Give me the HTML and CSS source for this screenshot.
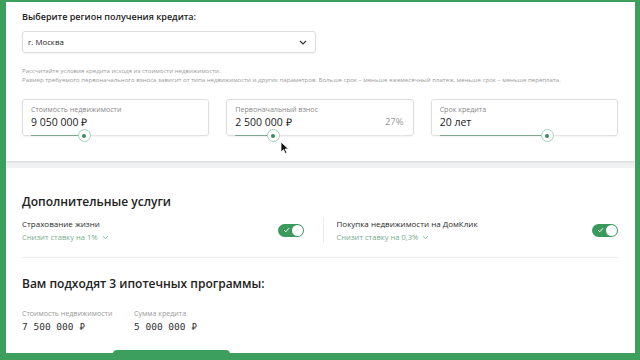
FILE: index.html
```html
<!DOCTYPE html>
<html lang="ru">
<head>
  <meta charset="UTF-8" />
  <meta name="viewport" content="width=device-width, initial-scale=1.0"/>
  <title>Ипотечный калькулятор</title>
  <link rel="stylesheet" href="styles.css">
</head>
<body>

  <div class="page">

    <div class="card calc">
      <h2 class="region-title">Выберите регион получения кредита:</h2>
      <div class="select">
        <span>г. Москва</span>
        <svg class="select-arrow" width="8" height="5" viewBox="0 0 8 5"><path d="M1 1l3 3 3-3" fill="none" stroke="#333" stroke-width="1.2"/></svg>
      </div>

      <p class="hint">
        Рассчитайте условия кредита исходя из стоимости недвижимости.<br>
        Размер требуемого первоначального взноса зависит от типа недвижимости и других параметров. Больше срок – меньше ежемесячный платеж, меньше срок – меньше переплата.
      </p>

      <div class="fields">
        <div class="field">
          <div class="field-label">Стоимость недвижимости</div>
          <div class="field-value">9 050 000 ₽</div>
          <div class="track"><div class="track-fill" style="width: 31.6%"><span class="knob"></span></div></div>
        </div>
        <div class="field">
          <div class="field-label">Первоначальный взнос</div>
          <div class="field-value">2 500 000 ₽ <span class="field-extra">27%</span></div>
          <div class="track"><div class="track-fill" style="width: 22.8%"><span class="knob"></span></div></div>
          <svg class="cursor" width="9" height="13" viewBox="0 0 9 13"><path d="M1 1v10l2.5-2.3 1.8 3.8 1.6-.8-1.8-3.7H8.5z" fill="#111" stroke="#fff" stroke-width="0.8"/></svg>
        </div>
        <div class="field">
          <div class="field-label">Срок кредита</div>
          <div class="field-value">20 лет</div>
          <div class="track"><div class="track-fill" style="width: 63.7%"><span class="knob"></span></div></div>
        </div>
      </div>
    </div>

    <div class="card extra">
      <h2 class="section-title">Дополнительные услуги</h2>

      <div class="services">
        <div class="service">
          <div>
            <div class="service-name">Страхование жизни</div>
            <div class="service-note">Снизит ставку на 1%
              <svg width="7" height="5" viewBox="0 0 7 5"><path d="M1 1.2l2.5 2.4L6 1.2" fill="none" stroke="#8fbfa0" stroke-width="1"/></svg>
            </div>
          </div>
          <span class="toggle">
            <svg width="7" height="6" viewBox="0 0 7 6"><path d="M1 3l1.8 1.8L6 1.2" fill="none" stroke="#fff" stroke-width="1"/></svg>
            <span class="toggle-knob"></span>
          </span>
        </div>
        <div class="divider"></div>
        <div class="service">
          <div>
            <div class="service-name">Покупка недвижимости на ДомКлик</div>
            <div class="service-note">Снизит ставку на 0,3%
              <svg width="7" height="5" viewBox="0 0 7 5"><path d="M1 1.2l2.5 2.4L6 1.2" fill="none" stroke="#8fbfa0" stroke-width="1"/></svg>
            </div>
          </div>
          <span class="toggle">
            <svg width="7" height="6" viewBox="0 0 7 6"><path d="M1 3l1.8 1.8L6 1.2" fill="none" stroke="#fff" stroke-width="1"/></svg>
            <span class="toggle-knob"></span>
          </span>
        </div>
      </div>

      <hr class="line">

      <h2 class="section-title programs">Вам подходят 3 ипотечных программы:</h2>

      <div class="stats">
        <div class="stat">
          <div class="stat-label">Стоимость недвижимости</div>
          <div class="stat-value">7 500 000 ₽</div>
        </div>
        <div class="stat">
          <div class="stat-label">Сумма кредита</div>
          <div class="stat-value">5 000 000 ₽</div>
        </div>
      </div>

      <div class="more-btn"></div>
    </div>

  </div>

</body>
</html>
```

FILE: styles.css
```css
* {
  box-sizing: border-box;
}

body {
  font-family: "Open Sans", Arial, sans-serif;
  margin: 0;
  height: 360px;
  overflow: hidden;
  background-color: #3c9f5e;
  padding: 2px 5px 0 6px;
  color: #222;
}

.page {
  height: 351px;
  overflow: hidden;
  background-color: #f1f2f4;
}

.card {
  background: white;
  padding: 0 17px 0 16px;
}

.calc {
  height: 159px;
  padding-top: 8px;
  box-shadow: 0 1px 3px rgba(0,0,0,0.12);
}

.extra {
  margin-top: 7px;
  height: 400px;
  padding-top: 25px;
}

h2 {
  margin: 0;
}

.region-title {
  font-size: 9px;
  line-height: 13px;
  font-weight: 600;
}

.select {
  margin-top: 8px;
  width: 294px;
  height: 22px;
  border: 1px solid #dcdcdc;
  border-radius: 3px;
  display: flex;
  align-items: center;
  justify-content: space-between;
  padding: 0 8px 0 5px;
  font-size: 7.8px;
  box-shadow: 0 1px 2px rgba(0,0,0,0.05);
}

.hint {
  margin: 13px 0 0;
  font-size: 6.1px;
  line-height: 9px;
  color: #9a9a9a;
}

.fields {
  display: flex;
  gap: 17px;
  margin-top: 15px;
}

.field {
  position: relative;
  flex: 1;
  height: 37px;
  border: 1px solid #dedede;
  border-radius: 3px;
  padding: 4px 9px 0 8px;
  box-shadow: 0 1px 2px rgba(0,0,0,0.05);
}

.field-label {
  font-size: 7.1px;
  line-height: 10px;
  color: #888;
}

.field-value {
  display: flex;
  justify-content: space-between;
  font-size: 10.5px;
  line-height: 14px;
  margin-top: 1px;
}

.field-extra {
  color: #999;
  font-size: 9.5px;
}

.track {
  position: absolute;
  left: 8px;
  right: 8px;
  bottom: -1px;
  height: 1px;
  background: #e6e6e6;
}

.track-fill {
  position: relative;
  height: 1px;
  background: #7ba88c;
}

.knob {
  position: absolute;
  right: -6px;
  top: -6px;
  width: 13px;
  height: 13px;
  border-radius: 50%;
  background: white;
  border: 1px solid #a9d3b8;
}

.knob::after {
  content: "";
  position: absolute;
  left: 3.5px;
  top: 3.5px;
  width: 4px;
  height: 4px;
  border-radius: 50%;
  background: #3d8a5d;
}

.cursor {
  position: absolute;
  left: 53px;
  top: 41px;
}

.section-title {
  font-size: 12px;
  line-height: 17px;
  font-weight: 600;
}

.services {
  display: flex;
  margin-top: 7px;
  height: 26px;
}

.service {
  flex: 1;
  display: flex;
  justify-content: space-between;
  align-items: center;
}

.service:first-child {
  padding-right: 19px;
}

.service:last-child {
  padding-left: 13px;
}

.divider {
  width: 1px;
  background: #ececec;
}

.service-name {
  font-size: 8px;
  line-height: 10px;
  color: #2a2a2a;
}

.service-note {
  margin-top: 3px;
  font-size: 7.6px;
  line-height: 10px;
  color: #79ad8c;
}

.service-note svg {
  margin-left: 2px;
  vertical-align: middle;
}

.toggle {
  display: flex;
  align-items: center;
  justify-content: space-between;
  width: 26px;
  height: 13px;
  border-radius: 7px;
  background: #3a9a5b;
  padding: 0 1px 0 5px;
}

.toggle-knob {
  width: 11px;
  height: 11px;
  border-radius: 50%;
  background: white;
}

.line {
  border: none;
  border-top: 1px solid #ececec;
  margin: 14px 0 0;
}

.programs {
  margin-top: 17px;
}

.stats {
  display: flex;
  margin-top: 16px;
}

.stat {
  width: 112px;
}

.stat-label {
  font-size: 7.1px;
  line-height: 10px;
  color: #999;
}

.stat-value {
  margin-top: 3px;
  font-family: "DejaVu Sans Mono", monospace;
  font-size: 9.5px;
  line-height: 12px;
  color: #333;
}

.more-btn {
  margin: 17px 0 0 91px;
  width: 117px;
  height: 30px;
  border-radius: 4px;
  background: #3c9f5e;
}
```
